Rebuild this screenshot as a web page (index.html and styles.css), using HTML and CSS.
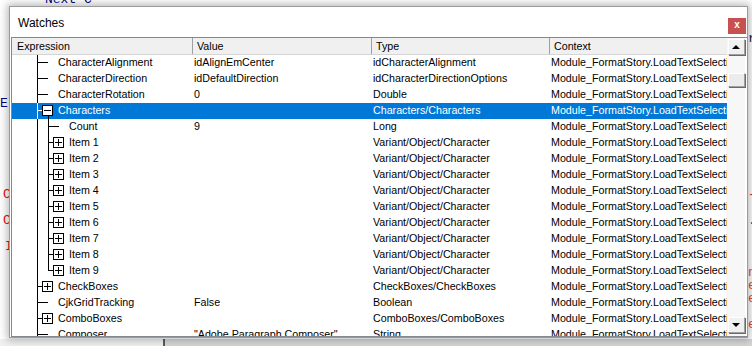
FILE: index.html
```html
<!DOCTYPE html>
<html lang="en">
<head>
    <meta charset="UTF-8">
    <title>Watches</title>
    <link rel="stylesheet" href="styles.css">
</head>
<body>
    <div class="editor">
        <div class="code">
            <div class="line"><span class="left kw pad45">Next C</span><span></span></div>
            <div class="line"><span class="left"></span><span></span></div>
            <div class="line"><span class="left"></span><span></span></div>
            <div class="line"><span class="left"></span><span class="right plain">r</span></div>
            <div class="line"><span class="left"></span><span></span></div>
            <div class="line"><span class="left"></span><span></span></div>
            <div class="line"><span class="left"></span><span></span></div>
            <div class="line"><span class="left"></span><span></span></div>
            <div class="line"><span class="left kw">Err.Clear</span><span></span></div>
            <div class="line"><span class="left"></span><span></span></div>
            <div class="line"><span class="left"></span><span></span></div>
            <div class="line"><span class="left"></span><span></span></div>
            <div class="line"><span class="left"></span><span></span></div>
            <div class="line"><span class="left"></span><span></span></div>
            <div class="line"><span class="left"></span><span></span></div>
            <div class="line"><span class="left err pad3">Call Fix</span><span class="right err">-</span></div>
            <div class="line"><span class="left"></span><span></span></div>
            <div class="line"><span class="left err pad3">Call Set</span><span class="right err">.</span></div>
            <div class="line"><span class="left"></span><span></span></div>
            <div class="line"><span class="left err pad5">If x</span><span></span></div>
            <div class="line"><span class="left"></span><span></span></div>
            <div class="line"><span class="left"></span><span class="right warn">n</span></div>
            <div class="line"><span class="left"></span><span class="right warn">e</span></div>
            <div class="line"><span class="left"></span><span class="right warn">e</span></div>
            <div class="line"><span class="left"></span><span></span></div>
            <div class="line"><span class="left"></span><span class="right warn">e</span></div>
        </div>
        <div class="hscroll">
            <div class="hs-left"></div>
            <div class="hs-split"></div>
            <div class="hs-right"></div>
        </div>
    </div>

    <div class="window">
        <div class="titlebar">
            <span class="title">Watches</span>
            <span class="close">x</span>
        </div>
        <div class="list">
            <div class="table">
                <div class="row head">
                    <div class="hcell first">Expression</div>
                    <div class="hcell">Value</div>
                    <div class="hcell">Type</div>
                    <div class="hcell">Context</div>
                </div>

                <div class="row">
                    <div class="expr"><span class="conn tee"></span>CharacterAlignment</div>
                    <div class="cell">idAlignEmCenter</div>
                    <div class="cell">idCharacterAlignment</div>
                    <div class="cell">Module_FormatStory.LoadTextSelection</div>
                </div>
                <div class="row">
                    <div class="expr"><span class="conn tee"></span>CharacterDirection</div>
                    <div class="cell">idDefaultDirection</div>
                    <div class="cell">idCharacterDirectionOptions</div>
                    <div class="cell">Module_FormatStory.LoadTextSelection</div>
                </div>
                <div class="row">
                    <div class="expr"><span class="conn tee"></span>CharacterRotation</div>
                    <div class="cell">0</div>
                    <div class="cell">Double</div>
                    <div class="cell">Module_FormatStory.LoadTextSelection</div>
                </div>
                <div class="row selected">
                    <div class="expr"><span class="conn tee open"><span class="box minus"></span></span>Characters</div>
                    <div class="cell"></div>
                    <div class="cell">Characters/Characters</div>
                    <div class="cell">Module_FormatStory.LoadTextSelection</div>
                </div>
                <div class="row">
                    <div class="expr"><span class="guide"></span><span class="conn tee"></span>Count</div>
                    <div class="cell">9</div>
                    <div class="cell">Long</div>
                    <div class="cell">Module_FormatStory.LoadTextSelection</div>
                </div>
                <div class="row">
                    <div class="expr"><span class="guide"></span><span class="conn tee"><span class="box plus"></span></span>Item 1</div>
                    <div class="cell"></div>
                    <div class="cell">Variant/Object/Character</div>
                    <div class="cell">Module_FormatStory.LoadTextSelection</div>
                </div>
                <div class="row">
                    <div class="expr"><span class="guide"></span><span class="conn tee"><span class="box plus"></span></span>Item 2</div>
                    <div class="cell"></div>
                    <div class="cell">Variant/Object/Character</div>
                    <div class="cell">Module_FormatStory.LoadTextSelection</div>
                </div>
                <div class="row">
                    <div class="expr"><span class="guide"></span><span class="conn tee"><span class="box plus"></span></span>Item 3</div>
                    <div class="cell"></div>
                    <div class="cell">Variant/Object/Character</div>
                    <div class="cell">Module_FormatStory.LoadTextSelection</div>
                </div>
                <div class="row">
                    <div class="expr"><span class="guide"></span><span class="conn tee"><span class="box plus"></span></span>Item 4</div>
                    <div class="cell"></div>
                    <div class="cell">Variant/Object/Character</div>
                    <div class="cell">Module_FormatStory.LoadTextSelection</div>
                </div>
                <div class="row">
                    <div class="expr"><span class="guide"></span><span class="conn tee"><span class="box plus"></span></span>Item 5</div>
                    <div class="cell"></div>
                    <div class="cell">Variant/Object/Character</div>
                    <div class="cell">Module_FormatStory.LoadTextSelection</div>
                </div>
                <div class="row">
                    <div class="expr"><span class="guide"></span><span class="conn tee"><span class="box plus"></span></span>Item 6</div>
                    <div class="cell"></div>
                    <div class="cell">Variant/Object/Character</div>
                    <div class="cell">Module_FormatStory.LoadTextSelection</div>
                </div>
                <div class="row">
                    <div class="expr"><span class="guide"></span><span class="conn tee"><span class="box plus"></span></span>Item 7</div>
                    <div class="cell"></div>
                    <div class="cell">Variant/Object/Character</div>
                    <div class="cell">Module_FormatStory.LoadTextSelection</div>
                </div>
                <div class="row">
                    <div class="expr"><span class="guide"></span><span class="conn tee"><span class="box plus"></span></span>Item 8</div>
                    <div class="cell"></div>
                    <div class="cell">Variant/Object/Character</div>
                    <div class="cell">Module_FormatStory.LoadTextSelection</div>
                </div>
                <div class="row">
                    <div class="expr"><span class="guide"></span><span class="conn ell"><span class="box plus"></span></span>Item 9</div>
                    <div class="cell"></div>
                    <div class="cell">Variant/Object/Character</div>
                    <div class="cell">Module_FormatStory.LoadTextSelection</div>
                </div>
                <div class="row">
                    <div class="expr"><span class="conn tee"><span class="box plus"></span></span>CheckBoxes</div>
                    <div class="cell"></div>
                    <div class="cell">CheckBoxes/CheckBoxes</div>
                    <div class="cell">Module_FormatStory.LoadTextSelection</div>
                </div>
                <div class="row">
                    <div class="expr"><span class="conn tee"></span>CjkGridTracking</div>
                    <div class="cell">False</div>
                    <div class="cell">Boolean</div>
                    <div class="cell">Module_FormatStory.LoadTextSelection</div>
                </div>
                <div class="row">
                    <div class="expr"><span class="conn tee"><span class="box plus"></span></span>ComboBoxes</div>
                    <div class="cell"></div>
                    <div class="cell">ComboBoxes/ComboBoxes</div>
                    <div class="cell">Module_FormatStory.LoadTextSelection</div>
                </div>
                <div class="row">
                    <div class="expr"><span class="conn tee"></span>Composer</div>
                    <div class="cell">"Adobe Paragraph Composer"</div>
                    <div class="cell">String</div>
                    <div class="cell">Module_FormatStory.LoadTextSelection</div>
                </div>
            </div>
            <div class="vscroll">
                <div class="sbtn up"></div>
                <div class="thumb"></div>
                <div class="track"></div>
                <div class="sbtn down"></div>
            </div>
        </div>
    </div>
</body>
</html>
```

FILE: styles.css
```css
html, body {
    margin: 0;
}
body {
    width: 752px;
    height: 346px;
    overflow: hidden;
    position: relative;
    background: #fff;
    font-family: "Liberation Sans", Arial, sans-serif;
}

/* code window behind the dialog */
.editor {
    display: flex;
    flex-direction: column;
    height: 346px;
}
.code {
    height: 339px;
    overflow: hidden;
    font-family: "Liberation Mono", "Courier New", monospace;
    font-size: 13px;
}
.code .line:first-child {
    margin-top: -7px;
}
.line {
    display: grid;
    grid-template-columns: 747px 1fr;
    height: 13px;
    line-height: 13px;
    white-space: pre;
}
.left {
    overflow: hidden;
}
.right {
    padding-left: 1px;
}
.pad45 { padding-left: 45px; }
.pad3 { padding-left: 3px; }
.pad5 { padding-left: 5px; }
.kw { color: #00007f; }
.plain { color: #1a1a4a; }
.err { color: #e01010; }
.warn { color: #e0501a; }

.hscroll {
    flex: 1;
    display: flex;
}
.hs-left {
    width: 163px;
    background: #f0f0f0;
}
.hs-split {
    width: 2px;
    background: #5a5a5a;
}
.hs-right {
    flex: 1;
    background: #d6d6d6;
}

/* the watches dialog floats over the editor */
.window {
    position: absolute;
    left: 9px;
    top: 6px;
    width: 737px;
    height: 330px;
    border: 1px solid #9a9a9a;
    background: #fff;
    box-shadow: 0 0 8px 2px rgba(0, 0, 0, 0.28);
    display: flex;
    flex-direction: column;
}
.titlebar {
    height: 30px;
    display: flex;
    align-items: center;
    justify-content: space-between;
    padding-left: 8px;
    padding-right: 1px;
}
.title {
    font-size: 12px;
    color: #000;
    margin-top: 1px;
}
.close {
    align-self: flex-end;
    margin-bottom: 3px;
    width: 18px;
    height: 16px;
    background: #c75050;
    color: #fff;
    font-size: 10px;
    font-weight: bold;
    line-height: 14px;
    text-align: center;
}

.list {
    flex: 1;
    margin-left: 1px;
    border: 1px solid #828790;
    border-right: none;
    display: flex;
    overflow: hidden;
    font-size: 10.7px;
}
.table {
    width: 715px;
    overflow: hidden;
}
.row {
    display: grid;
    grid-template-columns: 180px 179px 178px 178px;
    height: 16px;
    line-height: 15px;
    color: #000;
}
.row.selected {
    background: #0078d7;
    color: #fff;
}
.head {
    height: 17px;
    line-height: 16px;
    background: #f0f0f0;
    border-bottom: 1px solid #d5d5d5;
    box-sizing: border-box;
}
.hcell {
    border-left: 1px solid #a0a0a0;
    padding-left: 4px;
    white-space: nowrap;
    overflow: hidden;
}
.hcell.first {
    border-left: none;
    padding-left: 5px;
}
.cell {
    padding-left: 2px;
    white-space: nowrap;
    overflow: hidden;
}
.expr {
    display: flex;
    padding-left: 20px;
    white-space: nowrap;
    overflow: hidden;
}

/* tree lines */
.guide {
    flex: none;
    width: 11px;
    background: linear-gradient(#000, #000) 5px 0 / 1px 100% no-repeat;
}
.conn {
    flex: none;
    width: 26px;
    height: 16px;
    display: flex;
    align-items: flex-start;
    color: #000;
}
.conn.tee {
    background:
        linear-gradient(currentColor, currentColor) 5px 0 / 1px 100% no-repeat,
        linear-gradient(currentColor, currentColor) 5px 7px / 11px 1px no-repeat;
}
.conn.ell {
    background:
        linear-gradient(currentColor, currentColor) 5px 0 / 1px 8px no-repeat,
        linear-gradient(currentColor, currentColor) 5px 7px / 11px 1px no-repeat;
}
.selected .conn {
    color: #fff;
}
.conn.open {
    background:
        linear-gradient(currentColor, currentColor) 5px 0 / 1px 100% no-repeat,
        linear-gradient(currentColor, currentColor) 5px 7px / 11px 1px no-repeat,
        linear-gradient(#000, #000) 16px 13px / 1px 3px no-repeat;
}
.box {
    margin-left: 10px;
    margin-top: 2px;
    width: 9px;
    height: 9px;
    border: 1px solid #000;
    background-color: #fff;
}
.box.plus {
    background:
        linear-gradient(#000, #000) 1px 4px / 7px 1px no-repeat,
        linear-gradient(#000, #000) 4px 1px / 1px 7px no-repeat,
        #fff;
}
.box.minus {
    background:
        linear-gradient(#000, #000) 1px 4px / 7px 1px no-repeat,
        #fff;
}

/* vertical scrollbar */
.vscroll {
    width: 18px;
    display: flex;
    flex-direction: column;
    align-items: center;
    background: #f7f7f7;
}
.sbtn {
    width: 15px;
    height: 14px;
    margin-top: 1px;
    background: #f0f0f0;
    border: 1px solid;
    border-color: #fff #a0a0a0 #a0a0a0 #fff;
    box-shadow: 1px 1px 0 #696969;
    display: flex;
    align-items: center;
    justify-content: center;
}
.sbtn.up::before {
    content: "";
    border-left: 4px solid transparent;
    border-right: 4px solid transparent;
    border-bottom: 4px solid #000;
}
.sbtn.down {
    margin-bottom: 3px;
}
.sbtn.down::before {
    content: "";
    border-left: 4px solid transparent;
    border-right: 4px solid transparent;
    border-top: 4px solid #000;
}
.thumb {
    margin-top: 18px;
    width: 15px;
    height: 12px;
    background: #ececec;
    border: 1px solid;
    border-color: #fff #a0a0a0 #a0a0a0 #fff;
    box-shadow: 1px 1px 0 #696969;
}
.track {
    flex: 1;
}
```
